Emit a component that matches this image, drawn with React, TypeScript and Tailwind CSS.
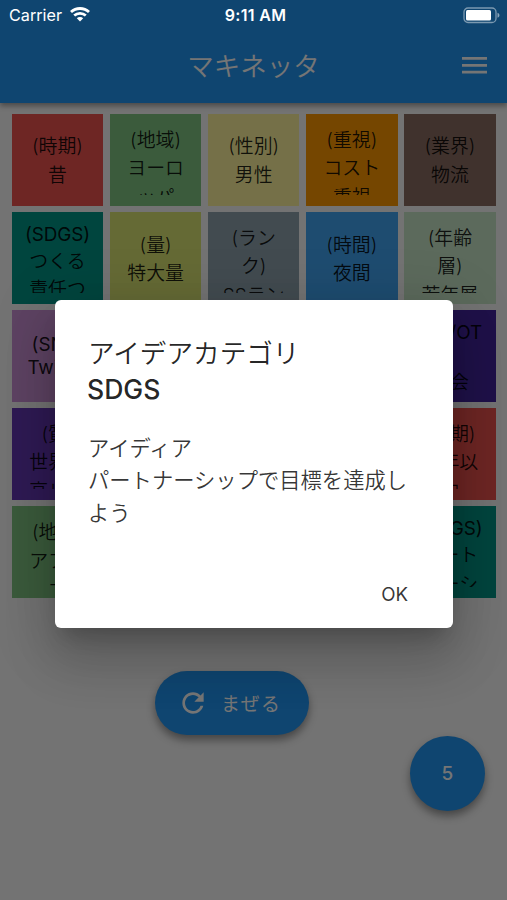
import React from "react";

type Line = { text: string; latin?: boolean };
type Card = { color: string; lines: Line[] };

const j = (text: string): Line => ({ text });
const l = (text: string): Line => ({ text, latin: true });

const cards: Card[] = [
  { color: "bg-[#ef5350]", lines: [j("(時期)"), j("昔")] },
  { color: "bg-[#81c784]", lines: [j("(地域)"), j("ヨーロ"), j("ッパ")] },
  { color: "bg-[#fff59d]", lines: [j("(性別)"), j("男性")] },
  { color: "bg-[#ff9800]", lines: [j("(重視)"), j("コスト"), j("重視")] },
  { color: "bg-[#8d6e63]", lines: [j("(業界)"), j("物流")] },
  { color: "bg-[#009688]", lines: [l("(SDGS)"), j("つくる"), j("責任つ")] },
  { color: "bg-[#dce775]", lines: [j("(量)"), j("特大量")] },
  { color: "bg-[#90a4ae]", lines: [j("(ラン"), j("ク)"), j("SSラン")] },
  { color: "bg-[#42a5f5]", lines: [j("(時間)"), j("夜間")] },
  { color: "bg-[#c8e6c9]", lines: [j("(年齢"), j("層)"), j("若年層")] },
  { color: "bg-[#ce93d8]", lines: [l("(SNS)"), l("Twitter")] },
  { color: "bg-[#81c784]", lines: [j("(地域)"), j("日本")] },
  { color: "bg-[#fff59d]", lines: [j("(性別)"), j("女性")] },
  { color: "bg-[#42a5f5]", lines: [j("(時間)"), j("朝")] },
  { color: "bg-[#4527a0]", lines: [l("(VR/OT"), l(")"), j("社会")] },
  { color: "bg-[#673ab7]", lines: [j("(質)"), j("世界最"), j("高レベ")] },
  { color: "bg-[#dce775]", lines: [j("(量)"), j("少量")] },
  { color: "bg-[#8d6e63]", lines: [j("(業界)"), j("医療")] },
  { color: "bg-[#ff9800]", lines: [j("(重視)"), j("品質")] },
  { color: "bg-[#ef5350]", lines: [j("(時期)"), j("百年以"), j("内")] },
  { color: "bg-[#81c784]", lines: [j("(地域)"), j("アフリ"), j("カ")] },
  { color: "bg-[#fff59d]", lines: [j("(性別)"), j("男性")] },
  { color: "bg-[#42a5f5]", lines: [j("(時間)"), j("昼")] },
  { color: "bg-[#dce775]", lines: [j("(量)"), j("大量")] },
  { color: "bg-[#009688]", lines: [l("(SDGS)"), j("パート"), j("ナーシ")] },
];

function IdeaCard({ color, lines }: Card) {
  return (
    <div className={`h-[91.6px] p-[10.8px] ${color}`}>
      <div
        className={`flex h-full flex-col items-center overflow-hidden text-[18.9px] text-black/87 ${
          lines.length > 2 ? "justify-start" : "justify-center"
        }`}
      >
        {lines.map((line, i) => (
          <div
            key={i}
            className={`shrink-0 whitespace-nowrap ${
              line.latin ? "h-[23px] leading-[24px] tracking-[-0.1px]" : "h-[28.4px] leading-[31px] font-[350]"
            }`}
          >
            {line.text}
          </div>
        ))}
      </div>
    </div>
  );
}

function StatusBar() {
  return (
    <div className="absolute inset-x-0 top-0 z-20 flex h-[30px] items-center justify-between pr-[7px] pl-[9px] text-white">
      <div className="flex w-[180px] items-center gap-[8px] text-[16.2px]">
        <span>Carrier</span>
        <svg width="20" height="15" viewBox="0 0 20 15" fill="none" stroke="white">
          <path d="M1 5.1a13 13 0 0 1 18 0" strokeWidth="2.8" />
          <path d="M4.2 8.6a8.4 8.4 0 0 1 11.6 0" strokeWidth="2.7" />
          <path d="M10 14.4 6.8 11.2a4.6 4.6 0 0 1 6.4 0Z" fill="white" stroke="none" />
        </svg>
      </div>
      <span className="pl-[2px] text-[16px] font-semibold tracking-[0.3px] whitespace-nowrap">9:11 AM</span>
      <div className="flex w-[180px] justify-end">
        <svg width="37" height="17" viewBox="0 0 37 17" fill="none">
          <rect x="1" y="1" width="32" height="14.5" rx="4" stroke="white" strokeOpacity="0.45" strokeWidth="1.3" />
          <rect x="3" y="3" width="25" height="10.5" rx="1.5" fill="white" />
          <path d="M34.5 5.8c2.6.8 2.6 4.1 0 4.9Z" fill="white" fillOpacity="0.5" />
        </svg>
      </div>
    </div>
  );
}

export default function App() {
  return (
    <div className="relative h-[900px] w-[507px] overflow-hidden bg-[#fafafa] font-[Inter,'Noto_Sans_CJK_JP',sans-serif]">
      <header className="flex h-[103px] items-end bg-[#2196f3] pr-[20px] pl-[45px] shadow-[0_3px_5px_rgba(0,0,0,0.35)]">
        <h1 className="h-[75px] flex-1 text-center text-[26.5px] leading-[77px] font-[350] text-white">マキネッタ</h1>
        <svg className="mb-[28px]" width="25" height="18" viewBox="0 0 25 18" fill="white">
          <path d="M0 0h25v2.8H0zM0 6.9h25v2.8H0zM0 13.8h25v2.8H0z" />
        </svg>
      </header>

      <main className="flex flex-col">
        <div className="grid grid-cols-5 gap-[6.5px] pt-[11px] pr-[11.3px] pl-[11.7px]">
          {cards.map((card, i) => (
            <IdeaCard key={i} {...card} />
          ))}
        </div>
        <button className="mt-[73px] ml-[155px] flex h-[64.5px] w-[154px] items-center rounded-full bg-[#2196f3] pl-[22px] text-white shadow-[0_5px_9px_rgba(0,0,0,0.4)]">
          <svg width="32" height="32" viewBox="0 0 24 24" fill="white">
            <path d="M17.65 6.35C16.2 4.9 14.21 4 12 4c-4.42 0-7.99 3.58-7.99 8s3.57 8 7.99 8c3.73 0 6.84-2.55 7.73-6h-2.08c-.82 2.33-3.04 4-5.65 4-3.31 0-6-2.69-6-6s2.69-6 6-6c1.66 0 3.14.69 4.22 1.78L13 11h7V4l-2.35 2.35z" />
          </svg>
          <span className="ml-[12px] pt-[3px] text-[18.9px] tracking-[1.4px]">まぜる</span>
        </button>
        <button className="mt-[0.5px] ml-[409.7px] h-[75.5px] w-[75.5px] rounded-full bg-[#2196f3] text-[18.9px] font-medium text-white shadow-[0_5px_9px_rgba(0,0,0,0.4)]">
          5
        </button>
      </main>

      <div className="absolute inset-0 z-10 bg-black/54" />
      <StatusBar />

      <section className="absolute top-[300px] left-[55px] z-20 flex h-[328px] w-[398px] flex-col rounded-[6px] bg-white px-[33px] pt-[33px] shadow-[0_15px_20px_-9px_rgba(0,0,0,0.2),0_32px_50px_4px_rgba(0,0,0,0.14),0_12px_60px_10px_rgba(0,0,0,0.12)]">
        <h2 className="text-[26.6px] text-black/87">
          <span className="block h-[39px] leading-[41px] font-[350]">アイデアカテゴリ</span>
          <span className="-ml-[1px] block h-[34px] leading-[34px] font-medium">SDGS</span>
        </h2>
        <p className="mt-[26px] text-[21.3px] leading-[32.4px] font-[350] text-black/80">
          アイディア
          <br />
          パートナーシップで目標を達成し
          <br />
          よう
        </p>
        <button className="mt-[41px] mr-[12px] self-end text-[18.7px] leading-[50px] text-black/80">OK</button>
      </section>
    </div>
  );
}
